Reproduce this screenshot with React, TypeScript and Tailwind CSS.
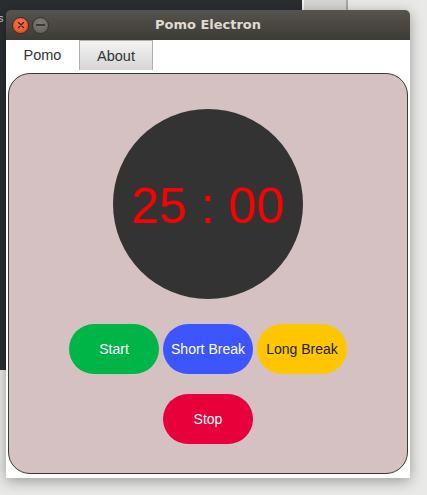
import React from "react"

function TrafficButtons() {
  return (
    <div className="flex items-center gap-[3px] pl-[6px]">
      <div className="w-[17px] h-[17px] rounded-full bg-[radial-gradient(circle_at_50%_35%,#f47a4c,#e0461c)] border border-[#3a2a22] flex items-center justify-center">
        <svg width="8" height="8" viewBox="0 0 8 8">
          <path d="M1.5 1.5 L6.5 6.5 M6.5 1.5 L1.5 6.5" stroke="#4a1a08" strokeWidth="1.3" strokeLinecap="round" />
        </svg>
      </div>
      <div className="w-[17px] h-[17px] rounded-full bg-[radial-gradient(circle_at_50%_35%,#807d78,#5e5b56)] border border-[#35332f] flex items-center justify-center">
        <div className="w-[9px] h-[1.5px] bg-[#3a3834]" />
      </div>
    </div>
  )
}

function PillButton({ label, className }: { label: string; className: string }) {
  return (
    <button
      className={
        "w-[90px] h-[50px] rounded-full flex items-center justify-center text-[14px] " + className
      }
    >
      {label}
    </button>
  )
}

export default function App() {
  return (
    <div
      className="relative w-[427px] h-[495px] overflow-hidden bg-[#e9e9e7]"
      style={{ fontFamily: '"Liberation Sans", Arial, sans-serif' }}
    >
      {/* desktop behind the window */}
      <div className="absolute left-0 top-0 w-[302px] h-[370px] bg-[#2b2e31]">
        <span className="absolute left-[-2px] top-[10px] text-[11px] text-[#cfd2d4]">s</span>
      </div>
      <div className="absolute left-[302px] top-0 w-[46px] h-[12px] bg-[#d6d6d4] border-l-2 border-r-2 border-l-[#f4f4f2] border-r-[#a8a8a6]" />

      {/* app window */}
      <div className="absolute left-[6px] top-[10px] w-[404px] h-[468px] flex flex-col rounded-t-[5px] shadow-[0_3px_14px_rgba(0,0,0,0.35)]">
        <div className="relative h-[30px] flex items-center rounded-t-[5px] bg-gradient-to-b from-[#57544e] to-[#3d3b36]">
          <TrafficButtons />
          <div
            className="absolute inset-0 flex items-center justify-center text-[13px] font-bold text-[#dfdbd2]"
            style={{ fontFamily: '"DejaVu Sans", sans-serif' }}
          >
            Pomo Electron
          </div>
        </div>

        <div className="flex-1 bg-white flex flex-col">
          <div className="flex h-[30px] text-[14.5px] text-[#333]">
            <div className="w-[73px] flex items-center justify-center bg-white pt-[2px]">Pomo</div>
            <div className="w-[74px] flex items-center justify-center pt-[2px] bg-gradient-to-b from-[#f3f3f3] to-[#d6d6d6] border-x border-t border-[#b0b0b0]">
              About
            </div>
          </div>

          <div className="mx-[2px] mt-[3px] h-[401px] rounded-[22px] border border-[#3a3a3a] bg-[#d5c1c2] flex flex-col items-center pt-[35px]">
            <div className="w-[190px] h-[190px] rounded-full bg-[#333333] flex items-center justify-center">
              <span className="text-[50px] leading-none text-[#ff0000] mt-[4px]">25 : 00</span>
            </div>
            <div className="flex gap-[4px] mt-[25px]">
              <PillButton label="Start" className="bg-[#00b548] text-white" />
              <PillButton label="Short Break" className="bg-[#3d55ff] text-white" />
              <PillButton label="Long Break" className="bg-[#ffc600] text-[#222]" />
            </div>
            <div className="mt-[20px]">
              <PillButton label="Stop" className="bg-[#e8003a] text-white" />
            </div>
          </div>
        </div>
      </div>
    </div>
  )
}
